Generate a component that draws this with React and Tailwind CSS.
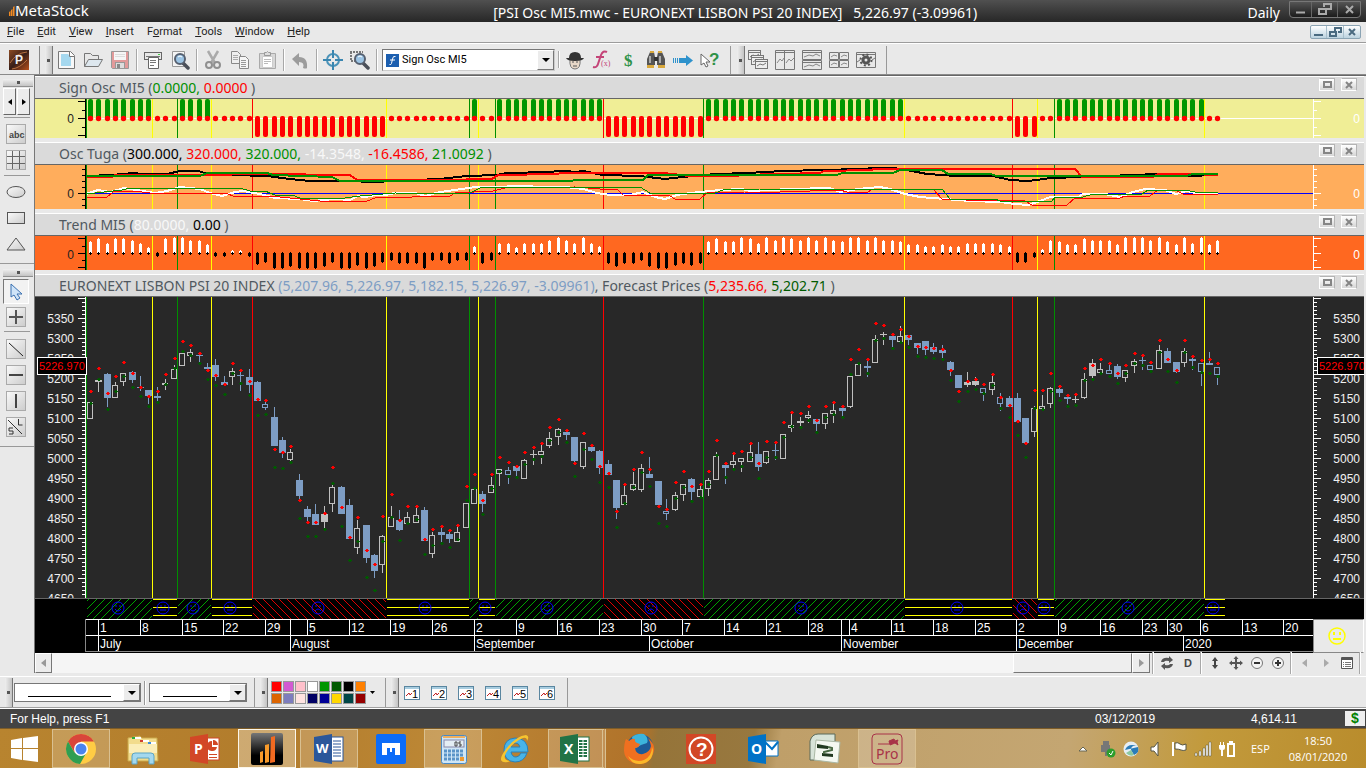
import React from "react";

const menuItems = ["File", "Edit", "View", "Insert", "Format", "Tools", "Window", "Help"];
const menuKeys = { Format: 1 };

const BLUE = "#7d9dc4";
const SILVER = "#c0c0c0";

// kind, high, body top, body bottom, low, forecast high, forecast low
// w = hollow up, h = hollow down, b = filled down, g = filled grey
const candles = [
  ["w", 402, 402, 419, 419, 391, 403],
  ["g", 379, 380, 382, 392, 368, 379],
  ["b", 373, 374, 398, 407, 393, 409],
  ["w", 382, 385, 398, 398, 376, 391],
  ["w", 373, 373, 382, 386, 362, 376],
  ["b", 371, 372, 380, 383, 373, 387],
  ["b", 376, 387, 388, 391, 387, 396],
  ["b", 390, 390, 396, 404, 396, 406],
  ["b", 387, 396, 398, 402, 391, 402],
  ["w", 379, 383, 385, 390, 374, 384],
  ["w", 365, 369, 379, 379, 358, 368],
  ["w", 353, 353, 366, 366, 341, 351],
  ["w", 349, 352, 356, 362, 345, 355],
  ["b", 352, 355, 356, 362, 353, 363],
  ["b", 363, 367, 369, 370, 370, 379],
  ["b", 359, 365, 377, 381, 375, 385],
  ["b", 376, 382, 385, 386, 384, 394],
  ["w", 368, 371, 377, 385, 363, 373],
  ["b", 370, 375, 376, 391, 370, 383],
  ["b", 369, 377, 385, 393, 381, 395],
  ["b", 381, 382, 401, 401, 399, 415],
  ["h", 402, 404, 408, 410, 400, 414],
  ["b", 407, 417, 446, 446, 449, 467],
  ["b", 437, 440, 453, 458, 452, 468],
  ["w", 449, 452, 460, 461, 446, 462],
  ["b", 474, 480, 496, 499, 500, 518],
  ["b", 506, 509, 517, 521, 522, 536],
  ["b", 504, 514, 525, 525, 522, 536],
  ["g", 506, 514, 522, 528, 513, 529],
  ["w", 485, 487, 504, 512, 467, 483],
  ["b", 486, 487, 514, 514, 507, 526],
  ["b", 499, 505, 539, 539, 537, 560],
  ["w", 520, 528, 548, 554, 517, 541],
  ["b", 525, 525, 558, 563, 550, 577],
  ["b", 554, 555, 571, 578, 564, 590],
  ["w", 535, 536, 565, 573, 516, 541],
  ["w", 506, 517, 527, 527, 494, 517],
  ["b", 510, 520, 530, 531, 520, 540],
  ["w", 512, 517, 524, 524, 506, 523],
  ["w", 508, 515, 523, 523, 506, 519],
  ["b", 507, 510, 541, 541, 539, 554],
  ["w", 532, 535, 554, 558, 529, 545],
  ["b", 527, 532, 535, 542, 526, 543],
  ["b", 532, 534, 539, 543, 530, 547],
  ["w", 527, 532, 542, 542, 525, 539],
  ["w", 503, 503, 528, 528, 486, 500],
  ["w", 489, 489, 504, 504, 474, 488],
  ["b", 491, 494, 504, 512, 500, 514],
  ["w", 477, 485, 493, 493, 474, 488],
  ["w", 469, 469, 474, 486, 457, 471],
  ["h", 467, 470, 475, 484, 462, 476],
  ["b", 466, 466, 471, 476, 466, 477],
  ["w", 459, 460, 479, 479, 452, 464],
  ["g", 450, 454, 455, 465, 447, 459],
  ["w", 444, 451, 455, 464, 443, 456],
  ["w", 432, 438, 446, 448, 427, 440],
  ["w", 428, 429, 437, 445, 419, 432],
  ["b", 432, 432, 435, 440, 430, 442],
  ["b", 437, 437, 461, 463, 463, 476],
  ["w", 442, 442, 467, 469, 433, 449],
  ["b", 447, 447, 451, 452, 445, 459],
  ["b", 450, 451, 468, 474, 466, 482],
  ["b", 460, 464, 475, 475, 473, 487],
  ["b", 480, 480, 508, 519, 511, 527],
  ["w", 485, 495, 505, 505, 484, 503],
  ["w", 472, 484, 490, 491, 469, 487],
  ["w", 464, 468, 490, 492, 452, 472],
  ["b", 457, 474, 478, 478, 469, 486],
  ["b", 481, 481, 505, 505, 506, 523],
  ["h", 499, 511, 514, 520, 509, 526],
  ["w", 492, 495, 510, 511, 482, 498],
  ["w", 484, 484, 495, 501, 471, 487],
  ["b", 478, 479, 492, 501, 486, 501],
  ["w", 486, 489, 497, 497, 484, 497],
  ["w", 478, 480, 489, 496, 471, 484],
  ["w", 452, 456, 480, 480, 440, 455],
  ["b", 465, 465, 468, 484, 463, 477],
  ["w", 455, 461, 465, 468, 453, 469],
  ["w", 458, 458, 462, 472, 451, 466],
  ["w", 445, 452, 462, 462, 443, 457],
  ["b", 442, 454, 467, 471, 463, 478],
  ["w", 451, 451, 463, 464, 441, 457],
  ["b", 443, 450, 451, 460, 442, 457],
  ["w", 434, 434, 459, 459, 422, 437],
  ["w", 413, 425, 428, 432, 412, 426],
  ["g", 417, 421, 423, 429, 413, 427],
  ["w", 411, 415, 418, 423, 406, 420],
  ["b", 419, 419, 424, 431, 420, 432],
  ["w", 413, 413, 424, 429, 406, 417],
  ["w", 404, 410, 414, 423, 402, 414],
  ["b", 408, 408, 411, 416, 406, 417],
  ["w", 376, 376, 407, 408, 359, 374],
  ["w", 364, 364, 376, 376, 349, 363],
  ["b", 361, 366, 368, 377, 359, 373],
  ["w", 335, 339, 363, 363, 323, 340],
  ["g", 332, 334, 335, 345, 325, 338],
  ["b", 336, 336, 340, 347, 334, 348],
  ["w", 326, 336, 342, 342, 329, 342],
  ["b", 335, 335, 340, 345, 336, 347],
  ["b", 343, 343, 348, 354, 346, 356],
  ["b", 341, 341, 350, 355, 347, 357],
  ["b", 343, 347, 352, 354, 348, 358],
  ["b", 345, 350, 353, 358, 349, 359],
  ["b", 361, 362, 370, 376, 370, 380],
  ["b", 375, 375, 388, 388, 391, 401],
  ["g", 372, 382, 385, 387, 381, 391],
  ["g", 377, 381, 385, 386, 379, 389],
  ["h", 388, 388, 393, 401, 384, 393],
  ["w", 376, 382, 390, 395, 374, 385],
  ["h", 393, 397, 404, 411, 397, 408],
  ["b", 396, 398, 407, 407, 405, 417],
  ["b", 393, 398, 422, 422, 421, 435],
  ["b", 418, 418, 443, 443, 443, 457],
  ["w", 406, 408, 432, 437, 390, 408],
  ["w", 395, 406, 409, 409, 390, 409],
  ["w", 387, 388, 404, 408, 373, 391],
  ["b", 387, 389, 393, 397, 386, 400],
  ["b", 397, 397, 399, 404, 395, 406],
  ["g", 395, 399, 400, 403, 394, 405],
  ["w", 373, 379, 398, 399, 368, 380],
  ["g", 359, 363, 376, 378, 365, 379],
  ["w", 363, 369, 373, 374, 359, 373],
  ["h", 364, 370, 374, 374, 363, 376],
  ["b", 364, 366, 377, 379, 373, 383],
  ["w", 370, 370, 378, 382, 365, 373],
  ["w", 359, 361, 366, 373, 353, 363],
  ["b", 357, 360, 361, 370, 355, 365],
  ["h", 365, 365, 370, 370, 362, 371],
  ["w", 345, 350, 369, 369, 340, 352],
  ["b", 348, 351, 363, 363, 359, 371],
  ["b", 362, 362, 372, 373, 370, 382],
  ["w", 348, 351, 363, 367, 340, 352],
  ["b", 356, 359, 361, 370, 356, 367],
  ["h", 363, 363, 372, 386, 360, 372],
  ["b", 352, 363, 365, 365, 359, 373],
  ["h", 367, 367, 375, 385, 363, 376],
];

const trend = [
  12, 15, 10, 15, 15, 13, 10, 6, -3, 15, 16, 16, 13, 13, 9, -3, -3, 3, 3, -3,
  -11, -9, -15, -15, -13, -15, -15, -15, -13, -9, -15, -15, -12, -15, -13, -9,
  -7, -10, -10, -10, -15, -7, -7, -10, -7, -7, 7, -10, -7, 10, 10, 6, 10, 10,
  10, 13, 16, 13, 10, 16, 10, 7, -10, -13, -10, -10, -7, -13, -15, -15, -12,
  -10, -12, -10, 12, 15, 12, 12, 16, 15, 10, 16, 13, 16, 15, 13, 16, 13, 16,
  13, 12, 16, 16, 13, 16, 13, 13, 12, 9, 9, 7, 7, 9, 7, 7, 10, 10, 10, 10, 9,
  7, -9, -9, -4, 4, 13, 12, 9, 9, 15, 13, 13, 13, 9, 16, 16, 16, 13, 16, 12, 9,
  16, 10, 16, 9, 13,
];

const greenRuns = [[0, 7], [11, 14], [46, 46], [49, 61], [74, 97], [116, 133]];
const redRuns = [[20, 35], [62, 73], [111, 113]];
const inRuns = (runs, i) => runs.some(([a, b]) => i >= a && i <= b);

const barX = i => Math.round(90 + 8.35 * i);

const Y = "#ffff00";
const G = "#008f00";
const R = "#ff0000";

const signals = [
  [152, Y], [177, G], [211, Y], [252, R], [386, Y], [469, G], [478, Y], [495, G],
  [603, R], [703, G], [904, Y], [1012, R], [1037, Y], [1054, G], [1204, Y],
];

// start, end, mood, face x
const moods = [
  [87, 152, "up", 118], [153, 177, "flat", 163], [178, 211, "up", 193],
  [212, 252, "flat", 230], [253, 386, "down", 318], [387, 469, "flat", 425],
  [470, 478, "up", 0], [479, 495, "flat", 485], [496, 603, "up", 547],
  [604, 703, "down", 651], [704, 904, "up", 801], [905, 1012, "flat", 957],
  [1013, 1037, "down", 1023], [1038, 1054, "flat", 1044], [1055, 1204, "up", 1128],
  [1205, 1225, "flat", 1213],
];

const days = [
  [98, "1"], [140, "8"], [182, "15"], [223, "22"], [265, "29"], [290, ""], [307, "5"],
  [349, "12"], [390, "19"], [432, "26"], [474, "2"], [516, "9"], [557, "16"],
  [599, "23"], [641, "30"], [682, "7"], [724, "14"], [766, "21"], [808, "28"],
  [841, ""], [849, "4"], [891, "11"], [933, "18"], [975, "25"], [1016, "2"],
  [1058, "9"], [1100, "16"], [1142, "23"], [1167, "30"], [1200, "6"], [1242, "13"],
  [1283, "20"],
];

const months = [
  [98, "July"], [290, "August"], [474, "September"], [649, "October"],
  [841, "November"], [1016, "December"], [1183, "2020"],
];

const oscLines = [
  ["#000000", 2, "86,176 112,175 133,173 143,174 167,174 180,171 198,171 205,173 233,175 267,176 290,179 310,181 340,181 382,182 390,180 415,180 440,179 467,176 497,175 507,173 550,172 558,171 567,171 575,172 583,171 603,175 640,176 665,179 683,177 703,175 717,174 747,173 783,171 823,170 860,169 877,168 893,168 907,170 927,174 957,176 993,176 1010,180 1027,181 1037,180 1050,178 1082,177 1133,175 1158,174 1187,176 1218,175"],
  ["#ff0000", 2, "86,177 112,177 115,175 205,175 260,174 350,175 357,180 440,180 492,179 498,175 557,174 561,173 663,173 690,176 737,176 741,175 820,173 824,171 870,170 875,169 1075,169 1082,177 1153,177 1158,174 1190,174 1218,175"],
  ["#009000", 2, "86,176 200,176 207,173 267,173 273,175 332,177 340,181 570,181 576,180 643,180 648,175 837,175 842,173 893,173 900,170 942,170 948,174 990,174 997,176 1187,176 1192,174 1218,174"],
  ["#ffffff", 2, "86,194 98,190 110,192 124,188 143,191 155,193 167,191 180,187 200,189 210,193 222,196 235,192 243,191 260,194 275,198 300,199 313,201 335,199 350,200 358,196 365,197 375,195 385,195 395,193 415,193 425,196 440,192 455,190 475,187 500,187 515,186 550,187 565,187 583,189 597,193 610,195 630,195 643,192 655,197 665,199 677,195 690,193 720,190 742,189 750,191 770,190 790,189 830,188 840,192 858,189 880,187 890,189 905,194 920,197 945,199 970,201 1000,202 1015,204 1028,205 1040,201 1050,197 1078,197 1083,194 1105,194 1120,197 1133,192 1145,189 1165,190 1176,194 1187,191 1200,194 1218,194"],
  ["#ff0000", 1, "86,197 107,197 113,192 133,191 150,193 180,193 228,194 233,196 270,196 290,198 310,200 320,201 367,201 375,198 450,196 455,193 493,191 505,188 575,187 600,189 617,189 623,195 670,196 675,199 700,199 707,193 745,192 780,192 840,190 847,192 868,192 873,189 933,189 942,199 965,200 1025,201 1032,205 1067,205 1075,198 1120,198 1125,196 1150,196 1158,190 1177,191 1183,194 1218,195"],
  ["#009000", 1, "86,194 122,190 130,188 240,188 250,191 265,191 275,195 292,195 300,198 345,198 360,196 395,193 430,194 470,193 480,188 510,187 640,187 650,193 715,193 723,190 760,189 942,189 950,199 995,199 1000,201 1052,201 1055,197 1083,197 1093,194 1142,194 1148,190 1185,190 1195,192 1218,193"],
];

const swatches = [
  "#ff0000", "#d25ad2", "#ffc0cb", "#ffffff", "#009600", "#005a00", "#000000", "#ff8000",
  "#dc6400", "#7d7dbe", "#ffe4e1", "#000064", "#000096", "#ffd700", "#004646", "#960000",
];

/* ---------- chart pieces ---------- */

const Signals = ({ top, height }) =>
  signals.map(([x, color]) => (
    <rect key={x} x={x} y={top} width="1" height={height} fill={color} />
  ));

const Axis = ({ side, top, height, color, ticks, children }) => {
  const left = side === "left";
  return (
    <svg
      className={left ? "w-[52px] shrink-0" : "w-[51px] shrink-0"}
      height={height}
      viewBox={left ? `35 ${top} 52 ${height}` : `1313 ${top} 51 ${height}`}
      shapeRendering="crispEdges"
    >
      {ticks.map(([y, len]) => (
        <rect key={y} x={left ? 85 - len : 1314} y={y} width={len} height="1" fill={color} />
      ))}
      <rect x={left ? 85 : 1313} y={top} width="1" height={height} fill={color} />
      {left && <rect x="86" y={top} width="1" height={height} fill={G} />}
      {children}
    </svg>
  );
};

const AxisText = ({ side, y, fill, children }) => (
  <text
    x={side === "left" ? 74 : 1360}
    y={y}
    textAnchor="end"
    fill={fill}
    fontSize="12"
    fontFamily="Liberation Sans, sans-serif"
  >
    {children}
  </text>
);

const Plot = ({ top, height, children }) => (
  <svg
    className="flex-1 min-w-0"
    height={height}
    viewBox={`87 ${top} 1226 ${height}`}
    preserveAspectRatio="none"
    shapeRendering="crispEdges"
  >
    {children}
  </svg>
);

const PaneButton = ({ label, children }) => (
  <button
    aria-label={label}
    className="w-4 h-[13px] flex items-center justify-center bg-gradient-to-b from-[#ffffff] to-[#d6d6d6] border border-[#b4b4b4] border-l-white border-b-white"
  >
    {children}
  </button>
);

const PaneHeader = ({ children }) => (
  <div className="h-[23px] flex items-center justify-between bg-[#dadada] border-t border-white border-b border-b-[#666666] pl-6 pr-[7px]">
    <h2 className="font-['Noto_Sans','Open_Sans',sans-serif] text-[14px] leading-5 text-[#505860] whitespace-pre">
      {children}
    </h2>
    <div className="flex gap-[6px] pb-[6px]">
      <PaneButton label="Maximize pane">
        <svg width="9" height="7" viewBox="0 0 9 7">
          <rect x="1" y="1" width="7" height="5" fill="none" stroke="#858585" strokeWidth="2" />
        </svg>
      </PaneButton>
      <PaneButton label="Close pane">
        <svg width="8" height="8" viewBox="0 0 8 8">
          <path d="M1 1l6 6M7 1l-6 6" stroke="#858585" strokeWidth="2" />
        </svg>
      </PaneButton>
    </div>
  </div>
);

const smallTicks = [[101, 7], [110, 3], [118, 7], [127, 3], [135, 7]];
const oscTicks = [[169, 3], [175, 3], [181, 3], [187, 3], [193, 7], [199, 3], [205, 3]];
const trendTicks = [[238, 7], [246, 3], [253, 7], [260, 3], [267, 7]];
const priceTicks = Array.from({ length: 75 }, (_, i) => [298 + i * 4, i % 5 ? 3 : 7]);
const priceLabels = Array.from({ length: 15 }, (_, i) => [318 + i * 20, 5350 - i * 50]);

const SignPane = () => (
  <div className="flex bg-[#f0ee96]">
    <Axis side="left" top={99} height={39} color="#000" ticks={smallTicks}>
      <AxisText side="left" y={123} fill="#222">0</AxisText>
    </Axis>
    <Plot top={99} height={39}>
      <rect x="87" y="118" width="1226" height="1" fill="#fff" />
      <Signals top={99} height={39} />
      {candles.map((_, i) => {
        const x = barX(i);
        return (
          <g key={i} shapeRendering="auto">
            {inRuns(greenRuns, i) && <rect x={x - 2} y="99" width="5" height="20" rx="2" fill="#009600" />}
            {inRuns(redRuns, i) && <rect x={x - 2} y="116" width="5" height="21" rx="2" fill={R} />}
            {!inRuns(redRuns, i) && <circle cx={x + 0.5} cy="118.5" r="2.7" fill={R} />}
          </g>
        );
      })}
    </Plot>
    <Axis side="right" top={99} height={39} color="#fff" ticks={smallTicks}>
      <AxisText side="right" y={123} fill="#fff">0</AxisText>
    </Axis>
  </div>
);

const OscPane = () => (
  <div className="flex bg-[#ffad5c]">
    <Axis side="left" top={165} height={44} color="#000" ticks={oscTicks}>
      <AxisText side="left" y={198} fill="#222">0</AxisText>
    </Axis>
    <Plot top={165} height={44}>
      <Signals top={165} height={44} />
      <rect x="87" y="193" width="1226" height="1" fill="#00f" />
      {oscLines.map(([color, width, points], i) => (
        <polyline key={i} points={points} fill="none" stroke={color} strokeWidth={width} />
      ))}
    </Plot>
    <Axis side="right" top={165} height={44} color="#fff" ticks={oscTicks}>
      <AxisText side="right" y={198} fill="#fff">0</AxisText>
    </Axis>
  </div>
);

const TrendPane = () => (
  <div className="flex bg-[#ff6820]">
    <Axis side="left" top={236} height={34} color="#000" ticks={trendTicks}>
      <AxisText side="left" y={259} fill="#222">0</AxisText>
    </Axis>
    <Plot top={236} height={34}>
      <Signals top={236} height={34} />
      {trend.map((v, i) => {
        const x = barX(i);
        return v > 0 ? (
          <g key={i}>
            <rect x={x - 1} y={254 - v} width="3" height={v} fill="#fff" />
            <rect x={x} y={253 - v} width="1" height="1" fill="#fff" />
            <path d={`M${x - 1} 253h3v1h-3zM${x} 252h1v3h-1z`} fill="#000" />
          </g>
        ) : (
          <g key={i}>
            <rect x={x - 1} y="253" width="3" height={-v} fill="#000" />
            <rect x={x} y="252" width="1" height={2 - v} fill="#000" />
          </g>
        );
      })}
    </Plot>
    <Axis side="right" top={236} height={34} color="#fff" ticks={trendTicks}>
      <AxisText side="right" y={259} fill="#fff">0</AxisText>
    </Axis>
  </div>
);

const Candle = ({ x, data }) => {
  const [kind, high, top, bottom, low, up, down] = data;
  const color = kind === "b" || kind === "h" ? BLUE : SILVER;
  const hollow = kind === "w" || kind === "h";
  const dot = y => `M${x - 1} ${y}h4v1h-4zM${x} ${y - 1}h2v3h-2z`;
  return (
    <g>
      <rect x={x} y={high} width="1" height={Math.max(low - high, 1)} fill={color} />
      {hollow ? (
        <rect x={x - 2.5} y={top + 0.5} width="5" height={Math.max(bottom - top - 1, 1)} fill="#282828" stroke={color} />
      ) : (
        <rect x={x - 3} y={top} width="7" height={Math.max(bottom - top, 1)} fill={color} />
      )}
      <path d={dot(down)} fill="#005a00" />
      <path d={dot(up)} fill={R} />
    </g>
  );
};

const PriceAxis = ({ side }) => {
  const boxX = side === "left" ? 37 : 1317;
  return (
    <Axis side={side} top={297} height={301} color="#fff" ticks={priceTicks}>
      {priceLabels.map(([y, value]) => (
        <AxisText key={value} side={side} y={y + 5} fill="#f0f0f0">{value}</AxisText>
      ))}
      <rect x={boxX + 0.5} y="357.5" width="49" height="17" fill="#000" stroke="#fff" />
      <text x={boxX + 2} y="370" fill={R} fontSize="11" fontFamily="Liberation Sans, sans-serif">
        5226.970
      </text>
    </Axis>
  );
};

const PricePane = () => (
  <div className="flex bg-[#282828]">
    <PriceAxis side="left" />
    <Plot top={297} height={301}>
      <Signals top={297} height={301} />
      {candles.map((c, i) => (
        <Candle key={i} x={barX(i)} data={c} />
      ))}
    </Plot>
    <PriceAxis side="right" />
  </div>
);

const Face = ({ cx, cy, mood }) => (
  <g fill="none" stroke="#0000ff" shapeRendering="auto">
    <circle cx={cx} cy={cy} r="6" />
    <path d={`M${cx - 3} ${cy - 2}h2M${cx + 1} ${cy - 2}h2`} />
    {mood === "flat" && <path d={`M${cx - 3} ${cy + 2}h6`} />}
    {mood === "up" && <path d={`M${cx - 3} ${cy + 1}q3 4 6 0`} />}
    {mood === "down" && <path d={`M${cx - 3} ${cy + 3}q3 -4 6 0`} />}
  </g>
);

const MoodStrip = () => (
  <div className="flex bg-black border-t border-[#666666]">
    <div className="w-[52px] shrink-0" />
    <Plot top={599} height={20}>
      <defs>
        <pattern id="rising" width="8" height="8" patternUnits="userSpaceOnUse">
          <path d="M-1 9L9 -1M-1 1L1 -1M7 9L9 7" stroke="#00a000" />
        </pattern>
        <pattern id="falling" width="8" height="8" patternUnits="userSpaceOnUse">
          <path d="M-1 -1L9 9M7 -1L9 1M-1 7L1 9" stroke="#e00000" />
        </pattern>
      </defs>
      {moods.map(([a, b, mood, face]) => (
        <g key={a}>
          {mood === "flat" ? (
            [599, 607, 615].map(y => <rect key={y} x={a} y={y} width={b - a} height="1" fill={Y} />)
          ) : (
            <rect x={a} y="599" width={b - a} height="20" fill={mood === "up" ? "url(#rising)" : "url(#falling)"} />
          )}
          {face > 0 && <Face cx={face} cy={608} mood={mood} />}
        </g>
      ))}
    </Plot>
    <div className="w-[51px] shrink-0" />
  </div>
);

const DateAxis = () => (
  <div className="flex bg-black">
    <div className="w-[50px] shrink-0" />
    <svg
      className="flex-1 min-w-0"
      height="34"
      viewBox="85 619 1228 34"
      preserveAspectRatio="none"
      shapeRendering="crispEdges"
      fontSize="12"
      fontFamily="Liberation Sans, sans-serif"
    >
      <rect x="85" y="619" width="1228" height="1" fill="#fff" />
      <rect x="85" y="635" width="1228" height="1" fill="#fff" />
      <rect x="85" y="651" width="1228" height="1" fill="#888" />
      <rect x="85" y="619" width="1" height="33" fill="#888" />
      {days.map(([x, label]) => (
        <g key={x} fill="#fff">
          <rect x={x} y="620" width="1" height="15" />
          <text x={x + 2} y="632">{label}</text>
        </g>
      ))}
      {months.map(([x, label]) => (
        <g key={x} fill="#fff">
          <rect x={x} y="636" width="1" height="15" />
          <text x={x + 2} y="648">{label}</text>
        </g>
      ))}
    </svg>
    <div className="w-[51px] shrink-0 bg-[#e9e9e9] border border-[#888888] border-r-white flex items-center justify-center">
      <svg width="21" height="18" viewBox="0 0 21 18">
        <circle cx="9" cy="9" r="8" fill="none" stroke="#ffff00" strokeWidth="1.500" />
        <path d="M5 5h2v3H5zM11 5h2v3h-2zM5 11h8v2H5z" fill="#ffff00" />
      </svg>
    </div>
  </div>
);

/* ---------- chrome: bars and buttons ---------- */

const ToolButton = ({ label, children }) => (
  <button aria-label={label} className="w-[27px] h-[26px] pl-[3px] flex items-center shrink-0">
    <svg width="20" height="20" viewBox="0 0 20 20">{children}</svg>
  </button>
);

const Divider = () => <span className="w-[2px] mx-[2px] h-[22px] border-l border-[#a8a8a8] border-r border-r-white shrink-0" />;

const Grip = () => (
  <span className="w-2 self-stretch shrink-0 bg-gradient-to-r from-[#eeeeee] to-[#c4c4c4] border-r border-[#777777] flex items-center justify-center">
    <span className="size-[3px] bg-[#555555]" />
  </span>
);

const WideGrip = () => (
  <span className="h-2 w-[30px] mx-[3px] shrink-0 bg-gradient-to-b from-[#f0f0f0] to-[#c4c4c4] border-b border-[#909090] flex items-center justify-center">
    <span className="size-[3px] bg-[#555555]" />
  </span>
);

const DropArrow = () => (
  <span className="w-[17px] self-stretch shrink-0 bg-[#ececec] border border-white border-r-[#777777] border-b-[#777777] flex items-center justify-center pointer-events-none">
    <svg width="8" height="4" viewBox="0 0 8 4"><path d="M0 0h8L4 4z" /></svg>
  </span>
);

const TitleBar = () => (
  <header className="h-[22px] flex items-center bg-gradient-to-b from-[#505050] to-[#272727] text-white font-['Noto_Sans','Open_Sans',sans-serif]">
    <svg className="ml-[9px]" width="6" height="10" viewBox="0 0 6 10">
      <path d="M0 10V6l1.500-1v5zM2 10V4l1.500-1v7zM4 10V1l1.500-1v10z" fill="#f08a24" />
    </svg>
    <span className="pb-[2px] text-[15px] leading-5">MetaStock</span>
    <h1 className="flex-1 pl-[134px] pt-1 text-center text-[14px] leading-[18px] whitespace-pre">
      {"[PSI Osc MI5.mwc - EURONEXT LISBON PSI 20 INDEX]   5,226.97 (-3.09961)"}
    </h1>
    <span className="pt-1 text-[14px] leading-[18px]">Daily</span>
    <div className="ml-[9px] mr-[5px] mb-1 flex h-[17px] border border-[#777777] rounded-b-sm bg-gradient-to-b from-[#555555] to-[#1c1c1c] divide-x divide-[#666666]">
      <button aria-label="Minimize" className="w-[22px] flex items-center justify-center">
        <svg width="10" height="10"><path d="M0 8.500h9" stroke="#aaa" strokeWidth="2" /></svg>
      </button>
      <button aria-label="Restore" className="w-[26px] flex items-center justify-center">
        <svg width="14" height="12" fill="none" stroke="#aaa" strokeWidth="2"><path d="M6 4V1h7v5h-4M1 6h7v5H1z" /></svg>
      </button>
      <button aria-label="Close" className="w-[22px] flex items-center justify-center">
        <svg width="9" height="9"><path d="M1 1l7 7M8 1l-7 7" stroke="#aaa" strokeWidth="2" /></svg>
      </button>
    </div>
  </header>
);

const MenuBar = () => (
  <div className="h-[21px] flex items-center justify-between bg-[#e9e9e9] border-b border-[#9c9c9c]">
    <nav className="flex gap-[13px] pl-[7px] font-['Roboto',sans-serif] text-[11px] leading-4 text-[#222222]">
      {menuItems.map(item => {
        const k = menuKeys[item] || 0;
        return (
          <button key={item}>
            {item.slice(0, k)}
            <u>{item[k]}</u>
            {item.slice(k + 1)}
          </button>
        );
      })}
    </nav>
    <div className="flex h-[14px] mr-[5px] border border-[#8ba4b4] rounded-[2px] bg-gradient-to-b from-white to-[#bcd3e0] divide-x divide-[#a8bfcc]">
      <button aria-label="Minimize chart" className="w-4 flex items-center justify-center">
        <svg width="9" height="9"><path d="M0 7h9" stroke="#4a6a80" strokeWidth="2" /></svg>
      </button>
      <button aria-label="Restore chart" className="w-[17px] flex items-center justify-center">
        <svg width="13" height="10" fill="none" stroke="#4a6a80" strokeWidth="2"><path d="M6 4V1h6v4H9M1 5h6v4H1z" /></svg>
      </button>
      <button aria-label="Close chart" className="w-4 flex items-center justify-center">
        <svg width="8" height="8"><path d="M1 1l6 6M7 1l-6 6" stroke="#4a6a80" strokeWidth="2" /></svg>
      </button>
    </div>
  </div>
);

const Lens = () => (
  <>
    <path d="M13 13l5 5" stroke="#4a4f58" strokeWidth="3.500" strokeLinecap="round" />
    <circle cx="10" cy="9" r="5" fill="#9cc4e4" stroke="#566070" strokeWidth="2" />
    <path d="M8 7q2-2 4 0" fill="none" stroke="#fff" />
  </>
);

const Toolbar = () => (
  <div className="h-[31px] flex items-center bg-[#e9e9e9] border-t border-white pt-[2px]">
    <button aria-label="Power Console" className="mx-[9px] shrink-0">
      <svg width="20" height="20" viewBox="0 0 20 20">
        <defs>
          <linearGradient id="pc" x1="0" y1="0" x2="1" y2="1">
            <stop offset="0" stopColor="#8c4a22" />
            <stop offset=".5" stopColor="#3a1f18" />
            <stop offset="1" stopColor="#b8501c" />
          </linearGradient>
        </defs>
        <rect width="20" height="20" fill="url(#pc)" />
        <path d="M1 13q6-10 17-11M3 19q8-1 15-9" fill="none" stroke="#b87040" />
        <text x="6" y="14" fontSize="12" fontWeight="bold" fill="#eee" fontFamily="Liberation Sans">P</text>
      </svg>
    </button>
    <span className="ml-[1px] mr-[5px] self-stretch border-l border-[#888888]" />
    <Grip />
    <ToolButton label="New">
      <path d="M2.500 1.500h12l4 4v13h-16z" fill="#f8f8f8" stroke="#777" />
      <path d="M5 4h7l3 3v9H5z" fill="#a5d8ef" />
      <path d="M13.500 1.500v5h5" fill="#fff" stroke="#777" />
    </ToolButton>
    <ToolButton label="Open">
      <path d="M1.500 16.500v-13h6l2 2h6v4" fill="#e8e8e8" stroke="#777" />
      <path d="M1.500 16.500l4-7h14l-4 7z" fill="#dde7ee" stroke="#777" />
    </ToolButton>
    <ToolButton label="Save">
      <path d="M1.500 1.500h17v17h-16l-1-1z" fill="#e29a9a" stroke="#999" />
      <rect x="4" y="2" width="12" height="8" fill="#f6f6f6" />
      <path d="M5 4.500h10M5 6.500h10" stroke="#ddd" />
      <rect x="5.500" y="12.500" width="9" height="6" fill="#ddd" stroke="#999" />
      <rect x="7" y="14" width="3" height="4" fill="#888" />
    </ToolButton>
    <Divider />
    <ToolButton label="Print">
      <rect x="1.500" y="2.500" width="17" height="7" fill="#e8e8e8" stroke="#666" />
      <path d="M3 6.500h14" stroke="#777" />
      <path d="M5.500 7.500h10v11h-10z" fill="#fff" stroke="#666" />
      <path d="M7 10.500h6M7 12.500h6M7 15.500h4" stroke="#777" />
      <rect x="15" y="4" width="2" height="1" fill="#4c4" />
    </ToolButton>
    <ToolButton label="Print Preview">
      <path d="M2.500 1.500h12v15h-12z" fill="#f4f4f4" stroke="#999" />
      <Lens />
    </ToolButton>
    <Divider />
    <ToolButton label="Cut">
      <path d="M5 1l7 12M15 1L8 13" stroke="#aaa" strokeWidth="2.500" />
      <circle cx="6" cy="15" r="3" fill="none" stroke="#909090" strokeWidth="2" />
      <circle cx="14" cy="15" r="3" fill="none" stroke="#909090" strokeWidth="2" />
    </ToolButton>
    <ToolButton label="Copy">
      <path d="M1.500 1.500h6l3 3v9h-9z" fill="#eee" stroke="#888" />
      <path d="M3 5.500h5M3 7.500h5M3 9.500h5" stroke="#aaa" />
      <path d="M9.500 6.500h6l3 3v9h-9z" fill="#f6f6f6" stroke="#888" />
      <path d="M11 10.500h5M11 12.500h5M11 14.500h5M11 16.500h5" stroke="#999" />
    </ToolButton>
    <ToolButton label="Paste">
      <path d="M2.500 3.500h16v15h-16z" fill="#d8d8d8" stroke="#aaa" />
      <path d="M5.500 6.500h10v11h-10z" fill="#fff" stroke="#ccc" />
      <path d="M7.500 5.500v-3h2q1-2 2 0h2v3z" fill="#ddd" stroke="#999" />
      <path d="M7 9.500h7M7 11.500h7M7 13.500h4" stroke="#bbb" />
    </ToolButton>
    <Divider />
    <ToolButton label="Undo">
      <path d="M2 9l7-6v4q9 0 8 11-1 1-4 0 2-6-4-6v4z" fill="#9c9c9c" />
    </ToolButton>
    <Divider />
    <ToolButton label="Crosshair">
      <circle cx="10" cy="10" r="6" fill="none" stroke="#4b93b8" strokeWidth="2" />
      <path d="M10 0v8M10 12v8M0 10h8M12 10h8" stroke="#3a86b0" strokeWidth="2" />
    </ToolButton>
    <ToolButton label="Zoom Box">
      <path d="M0 2h13M1 2v9h5" fill="none" stroke="#777" strokeDasharray="2 1" strokeWidth="2" />
      <Lens />
    </ToolButton>
    <Divider />
    <label className="ml-[2px] w-[173px] h-[22px] shrink-0 flex items-center bg-white border border-[#777777] border-r-[#cccccc] border-b-[#cccccc] pl-[3px]">
      <svg width="13" height="13" viewBox="0 0 13 13" className="shrink-0">
        <rect width="13" height="13" fill="#1c5fb0" />
        <path d="M9.500 2.500Q7 1.500 6.500 5L5.500 9.500Q5 11 3.500 10.500M4 6h5" fill="none" stroke="#fff" />
      </svg>
      <select aria-label="Indicator" className="flex-1 min-w-0 appearance-none bg-transparent pl-[3px] font-['Roboto',sans-serif] text-[11px] leading-4 text-black">
        <option>Sign Osc MI5</option>
      </select>
      <DropArrow />
    </label>
    <span className="ml-[1px]"><Divider /></span>
    <ToolButton label="Expert Advisor">
      <path d="M5 9q-1 10 5 10t5-10z" fill="#e8d8c8" stroke="#777" />
      <path d="M4 8q0-6 6-6t6 6l3 0q-1 3-9 3T1 8z" fill="#333" />
      <path d="M7 12h2M11 12h2M8 16h4" stroke="#555" />
    </ToolButton>
    <ToolButton label="Indicator Builder">
      <path d="M15 2q-4-2-6 3L6 14q-1 4-5 3" fill="none" stroke="#c44478" strokeWidth="2" />
      <path d="M4 7h8" stroke="#c44478" strokeWidth="2" />
      <text x="9" y="16" fontSize="8" fill="#c44478" fontFamily="Liberation Serif">(x)</text>
    </ToolButton>
    <ToolButton label="System Tester">
      <text x="5" y="16" fontSize="17" fontWeight="bold" fill="#2f9248" fontFamily="Liberation Serif">$</text>
    </ToolButton>
    <ToolButton label="Explorer">
      <path d="M4 2h4l1 5v8H1V9zM12 2h4l3 7v6h-8V7z" fill="#555" />
      <path d="M8 7h4v4H8z" fill="#333" />
      <path d="M4 1h4v2H4zM12 1h4v2h-4zM1 15h7v3H1zM12 15h7v3h-7z" fill="#d8a83c" />
      <path d="M4 6v7M14 6v7" stroke="#aaa" strokeWidth="2" />
    </ToolButton>
    <ToolButton label="Option Scope">
      <path d="M0 8h1v5H0zM2 8h1v5H2zM4 8h1v5H4zM6 8h7V5l7 5.500-7 5.500v-3H6z" fill="#2e92cc" />
    </ToolButton>
    <ToolButton label="Context Help">
      <path d="M1 4v11l3-2 2 4 2-1-2-4h4z" fill="#fff" stroke="#666" />
      <text x="9" y="15" fontSize="17" fontWeight="bold" fill="#2f9248" fontFamily="Liberation Sans">?</text>
    </ToolButton>
    <span className="mx-[6px] self-stretch border-l border-[#999999]" />
    <Grip />
    <ToolButton label="Cascade">
      {[[0, 1], [3, 6], [7, 10]].map(([x, y]) => (
        <g key={x}>
          <rect x={x + 0.5} y={y - 0.5} width="12" height="9" fill="#eee" stroke="#777" />
          <path d={`M${x + 1} ${y + 1.5}h11M${x + 2} ${y + 6}l3-2 3 1 3-2`} fill="none" stroke="#777" />
        </g>
      ))}
    </ToolButton>
    <ToolButton label="Column">
      <path d="M.5 .5h19v19H.5zM.5 2.500h19M9.500 1v18" fill="#e8e8e8" stroke="#777" />
      <path d="M2 13l3-4 2 2 2-3M11 13l3-4 2 2 3-3" fill="none" stroke="#888" />
    </ToolButton>
    <ToolButton label="Row">
      <path d="M.5 .5h19v9H.5zM.5 10.500h19v9H.5zM1 2.500h18M1 12.500h18" fill="#e8e8e8" stroke="#777" />
      <path d="M2 7l5-2 4 1 3-2 4 2M2 17l5-2 4 1 3-2 4 2" fill="none" stroke="#888" />
    </ToolButton>
    <ToolButton label="Tile">
      <path d="M.5 2.500h9v7h-9zM10.500 2.500h9v7h-9zM.5 10.500h9v7h-9zM10.500 10.500h9v7h-9z" fill="#e8e8e8" stroke="#777" />
      <path d="M2 7l3-2 3 1M12 7l3-2 3 1M2 15l3-2 3 1M12 15l3-2 3 1" fill="none" stroke="#888" />
    </ToolButton>
    <ToolButton label="Chart Options">
      <path d="M.5 2.500h19v15H.5zM1 4.500h18M1 12l3-2M16 10l3-2" fill="#e8e8e8" stroke="#777" />
      <circle cx="10" cy="10" r="3" fill="none" stroke="#555" strokeWidth="3" />
      <circle cx="10" cy="10" r="5.500" fill="none" stroke="#555" strokeWidth="2" strokeDasharray="2 2.300" />
    </ToolButton>
    <span className="ml-[6px] self-stretch border-l border-[#999999]" />
  </div>
);

const SideButton = ({ label, framed, children }) => (
  <button aria-label={label} className="w-8 h-[26px] flex items-center justify-center shrink-0">
    <svg width="20" height="20" viewBox="0 0 20 20">
      {framed && <rect x=".5" y=".5" width="19" height="19" fill="url(#face)" stroke="#aaa" />}
      {children}
    </svg>
  </button>
);

const SideBar = () => (
  <aside className="w-[35px] shrink-0 bg-[#e9e9e9] border-r border-[#777777] flex flex-col pt-1">
    <svg width="0" height="0">
      <defs>
        <linearGradient id="face" x1="0" y1="0" x2="1" y2="1">
          <stop offset="0" stopColor="#fafafa" />
          <stop offset="1" stopColor="#cccccc" />
        </linearGradient>
      </defs>
    </svg>
    <WideGrip />
    <div className="flex gap-[1px] mt-[1px] ml-[3px] h-[27px]">
      <button aria-label="Previous" className="w-[13px] flex items-center justify-center bg-[#ececec] border border-white border-r-[#666666] border-b-[#666666]">
        <svg width="4" height="6"><path d="M4 0v6L0 3z" /></svg>
      </button>
      <button aria-label="Next" className="w-[13px] flex items-center justify-center bg-[#ececec] border border-white border-r-[#666666] border-b-[#666666]">
        <svg width="4" height="6"><path d="M0 0v6l4-3z" /></svg>
      </button>
    </div>
    <span className="mx-1 mt-[2px] mb-[3px] border-t border-[#999999]" />
    <SideButton label="Text" framed>
      <text x="3" y="14" fontSize="9" fontWeight="bold" fill="#444" fontFamily="Liberation Sans">abc</text>
    </SideButton>
    <SideButton label="Grid" framed>
      <path d="M1 6.500h18M1 13.500h18M6.500 1v18M13.500 1v18" stroke="#666" />
    </SideButton>
    <span className="mx-1 mt-[2px] mb-[3px] border-t border-[#999999]" />
    <SideButton label="Ellipse">
      <ellipse cx="10" cy="10" rx="9" ry="5.500" fill="url(#face)" stroke="#555" />
    </SideButton>
    <SideButton label="Rectangle">
      <rect x="1.500" y="4.500" width="17" height="11" fill="url(#face)" stroke="#555" />
    </SideButton>
    <SideButton label="Triangle">
      <path d="M1 16L10 4l9 12z" fill="url(#face)" stroke="#555" />
    </SideButton>
    <span className="mt-[6px] mb-[5px] border-t border-[#999999]" />
    <WideGrip />
    <button aria-label="Select" className="mx-[3px] mt-[2px] w-[26px] h-[25px] bg-[#f2f2f2] border border-[#777777] border-r-white border-b-white flex items-center justify-center">
      <svg width="16" height="20" viewBox="0 0 16 20">
        <path d="M3 2v13l3-2 3 5 3-2-3-4h5z" fill="#cfe4f8" stroke="#3a70b0" />
      </svg>
    </button>
    <SideButton label="Cross" framed>
      <path d="M10 3v14M3 10h14" stroke="#555" strokeWidth="2" />
    </SideButton>
    <span className="mx-1 mt-[1px] mb-1 border-t border-[#999999]" />
    <SideButton label="Trendline" framed><path d="M3 4l14 13" stroke="#222" /></SideButton>
    <SideButton label="Horizontal Line" framed><path d="M3 10h14" stroke="#444" strokeWidth="2" /></SideButton>
    <SideButton label="Vertical Line" framed><path d="M10 3v14" stroke="#444" strokeWidth="2" /></SideButton>
    <SideButton label="Trade Line" framed>
      <path d="M2 3l14 14M12.500 2v6h4" fill="none" stroke="#333" />
      <path d="M7 11H3v3h4v3H3" fill="none" stroke="#333" />
    </SideButton>
    <span className="mt-[6px] border-t border-[#999999]" />
  </aside>
);

const SmallButton = ({ label, children }) => (
  <button aria-label={label} className="w-[21px] h-[18px] flex items-center justify-center">
    <svg width="14" height="14" viewBox="0 0 14 14">{children}</svg>
  </button>
);

const ScrollRow = () => (
  <div className="h-[20px] flex bg-[#e9e9e9]">
    <button aria-label="Scroll left" className="w-[17px] bg-[#ececec] border border-white border-r-[#777777] border-b-[#777777] flex items-center justify-center">
      <svg width="5" height="8"><path d="M5 0v8L0 4z" fill="#999" /></svg>
    </button>
    <div className="flex-1 flex justify-end bg-[#f5f5f5]">
      <div className="w-[119px] bg-[#eeeeee] border border-white border-r-[#777777] border-b-[#777777]" />
    </div>
    <button aria-label="Scroll right" className="w-[18px] bg-[#ececec] border border-white border-r-[#777777] border-b-[#777777] flex items-center justify-center">
      <svg width="5" height="8"><path d="M0 0v8l5-4z" fill="#999" /></svg>
    </button>
    <div className="flex items-center w-[214px]">
      <Divider />
      <SmallButton label="Refresh">
        <path d="M1 6q1-5 8-4V0l4 4-4 3V5Q5 4 4 6zM13 8q-1 5-8 4v2L1 10l4-3v2q4 1 5-1z" fill="#555" />
      </SmallButton>
      <SmallButton label="Periodicity">
        <text x="3" y="11" fontSize="11" fontWeight="bold" fill="#444" fontFamily="Liberation Sans">D</text>
      </SmallButton>
      <Divider />
      <SmallButton label="Vertical scale">
        <path d="M7 1l3 4H8v4h2l-3 4-3-4h2V5H4z" fill="#444" />
      </SmallButton>
      <SmallButton label="Move">
        <path d="M7 0l2.500 3H8v3h3V4.500L14 7l-3 2.500V8H8v3h1.500L7 14l-2.500-3H6V8H3v1.500L0 7l3-2.500V6h3V3H4.500z" fill="#555" />
      </SmallButton>
      <SmallButton label="Zoom out">
        <circle cx="7" cy="7" r="5.500" fill="#f4f4f4" stroke="#777" />
        <path d="M4 7h6" stroke="#333" strokeWidth="2" />
      </SmallButton>
      <SmallButton label="Zoom in">
        <circle cx="7" cy="7" r="5.500" fill="#f4f4f4" stroke="#777" />
        <path d="M4 7h6M7 4v6" stroke="#333" strokeWidth="2" />
      </SmallButton>
      <Divider />
      <SmallButton label="Back"><path d="M9 3v8L4 7z" fill="#aaa" /></SmallButton>
      <SmallButton label="Forward"><path d="M5 3v8l5-4z" fill="#aaa" /></SmallButton>
      <SmallButton label="Data window">
        <path d="M1.500 1.500h11v11h-11z" fill="#fff" stroke="#555" />
        <path d="M2 3h10" stroke="#555" strokeWidth="2" />
        <path d="M3 6.500h1M5 6.500h6M3 8.500h1M5 8.500h6M3 10.500h1M5 10.500h6" stroke="#777" />
      </SmallButton>
      <Divider />
    </div>
  </div>
);

const LinePicker = ({ label, wide }) => (
  <label className={wide ? "w-[127px] h-[19px] flex bg-white border border-[#777777]" : "w-[98px] h-[19px] flex bg-white border border-[#777777]"}>
    <span className="flex-1 grid items-center">
      <select aria-label={label} className="col-start-1 row-start-1 w-full h-full appearance-none bg-transparent">
        <option label=" " />
      </select>
      <span className="col-start-1 row-start-1 ml-[13px] mr-[12px] border-t border-black pointer-events-none" />
    </span>
    <DropArrow />
  </label>
);

const StyleBar = () => (
  <div className="h-[31px] flex items-center bg-[#e9e9e9] border-b border-[#a0a0a0] pt-[1px]">
    <span className="ml-[5px] mr-[1px] self-stretch flex"><Grip /></span>
    <LinePicker label="Line style" wide />
    <span className="mx-[3px] h-6 border-l border-[#999999] border-r border-r-white" />
    <LinePicker label="Line weight" />
    <span className="ml-[7px] mr-[5px] self-stretch border-l border-[#999999]" />
    <span className="self-stretch flex"><Grip /></span>
    <div className="ml-[3px] grid grid-cols-8 gap-[1px]">
      {swatches.map(color => (
        <button
          key={color}
          aria-label={color}
          className="size-[11px] border border-[#999999]"
          style={{ backgroundColor: color }}
        />
      ))}
    </div>
    <button aria-label="More colors" className="ml-1 w-[7px]">
      <svg width="5" height="3"><path d="M0 0h5L2.500 3z" /></svg>
    </button>
    <span className="ml-2 mr-[5px] self-stretch border-l border-[#999999]" />
    <span className="self-stretch flex"><Grip /></span>
    {[1, 2, 3, 4, 5, 6].map(n => (
      <button key={n} aria-label={`Layout ${n}`} className="w-[27px] pl-[5px] flex">
        <svg width="16" height="14" viewBox="0 0 16 14">
          <rect x=".5" y=".5" width="15" height="13" fill="#fff" stroke="#5a86a0" />
          <path d="M1 2h14" stroke="#a8cde0" strokeWidth="2" />
          <path d="M2 10l3-3 1 2 2-2" fill="none" stroke="#c02020" />
          <text x="8" y="12" fontSize="11" fontFamily="Liberation Sans">{n}</text>
        </svg>
      </button>
    ))}
    <span className="ml-[6px] self-stretch border-l border-[#999999]" />
  </div>
);

const StatusBar = () => (
  <div className="h-[20px] flex items-center bg-[#444444] border-t border-white text-[12px] leading-4 text-white pl-[10px] pr-[1px]">
    <span className="flex-1">For Help, press F1</span>
    <span className="w-[156px]">03/12/2019</span>
    <span className="w-[94px]">4,614.11</span>
    <span className="w-5 h-[15px] bg-[#eeeeee] text-[#008000] font-bold text-center text-[14px] leading-[15px]">$</span>
  </div>
);

/* ---------- taskbar ---------- */

const taskItems = [
  {
    name: "Chrome", open: true,
    icon: (
      <>
        <circle cx="16" cy="16" r="15" fill="#fc4" />
        <path d="M3 8.500A15 15 0 0 1 29 8.500H16L10 20z" fill="#d9453a" />
        <path d="M3 8.500A15 15 0 0 0 15 31l6.500-11.500L16 16 9.500 19.500z" fill="#2f9e52" />
        <circle cx="16" cy="16" r="7" fill="#fff" />
        <circle cx="16" cy="16" r="5.500" fill="#4a84ee" />
      </>
    ),
  },
  {
    name: "File Explorer",
    icon: (
      <>
        <path d="M1 5l12-2 2 2h15l1 23H1z" fill="#f2dc8c" stroke="#c9a84a" />
        <path d="M5 4h3v2H5z" fill="#2cae3c" />
        <path d="M8 4h6v2H8zM16 7h6v2h-6zM24 9h5v2h-5z" fill="#fff" />
        <path d="M13 7h3v2h-3z" fill="#d04030" />
        <path d="M21 9h3v2h-3z" fill="#3c8cd8" />
        <path d="M2 11h28v9H2z" fill="#fbeeb8" />
        <path d="M5 31v-8q0-3 3-3h16q3 0 3 3v8h-5v-6H10v6z" fill="#a4d8ee" stroke="#5aa4c4" />
      </>
    ),
  },
  {
    name: "PowerPoint",
    icon: (
      <>
        <rect x="17" y="5" width="13" height="22" fill="#fff" stroke="#d24726" />
        <path d="M1 4l18-3v30L1 28z" fill="#d24726" />
        <path d="M23 8a5 5 0 1 0 5 6h-5zM24 7v5h5a5 5 0 0 0-5-5zM20 21h8v1h-8zM20 24h8v1h-8z" fill="#d24726" />
        <text x="5" y="21" fontSize="14" fontWeight="bold" fill="#fff" fontFamily="Open Sans">P</text>
      </>
    ),
  },
  {
    name: "MetaStock", open: true, active: true,
    icon: (
      <>
        <defs>
          <linearGradient id="ms" x1="0" y1="0" x2="0" y2="1">
            <stop offset="0" stopColor="#777" />
            <stop offset=".7" stopColor="#000" />
          </linearGradient>
        </defs>
        <rect width="32" height="32" rx="2" fill="url(#ms)" />
        <path d="M9 19l3-1v11l-3 1zM14 12l4-1v18l-4 1z" fill="#f79a2a" />
        <path d="M20 4l4-1v26l-5 1z" fill="#f26a21" />
      </>
    ),
  },
  {
    name: "Word", open: true,
    icon: (
      <>
        <rect x="17" y="4" width="13" height="24" fill="#fff" stroke="#2b579a" />
        <path d="M20 8h8M20 11h8M20 14h8M20 17h8M20 20h8M20 23h8" stroke="#2b579a" />
        <path d="M1 4l18-3v30L1 28z" fill="#2b579a" />
        <text x="3" y="20" fontSize="13" fontWeight="bold" fill="#fff" fontFamily="Open Sans">W</text>
      </>
    ),
  },
  {
    name: "Maxthon",
    icon: (
      <>
        <rect x="1" y="1" width="30" height="30" rx="2" fill="#0c6cf8" />
        <path d="M7 22V10h18v12h-5v-7h-3v4h-2v-4h-3v7z" fill="#fff" />
      </>
    ),
  },
  {
    name: "Calculator", open: true,
    icon: (
      <>
        <rect x="4.500" y="2.500" width="25" height="28" rx="2" fill="#cfe6f6" stroke="#4a8ac4" />
        <path d="M6 4h22" stroke="#f0b060" strokeWidth="2" />
        <rect x="7" y="7" width="20" height="7" fill="#e4eef4" stroke="#88a" />
        <path d="M18 9h2v4h-2zM24 9h-2v2h2v2h-2" fill="none" stroke="#444" />
        <path d="M7 18h20M7 22h20M7 26h20" stroke="#5a94c8" strokeWidth="3" strokeDasharray="3 1" />
        <rect x="23" y="24" width="4" height="4" fill="#f09a30" />
      </>
    ),
  },
  {
    name: "Internet Explorer",
    icon: (
      <>
        <path d="M28 20q-3 9-12 9Q5 28 5 17T16 5q13 0 13 14H12q1 5 5 5 3 0 5-4zM12 14h9q-1-4-4.500-4T12 14z" fill="#48b4e8" stroke="#2a80b8" />
        <path d="M5 29q-7-1 2-13Q17 3 27 2q4 1 1 6 0-4-4-3Q14 9 7 20q-4 7 4 8-3 2-6 1z" fill="#f6c430" />
      </>
    ),
  },
  {
    name: "Excel", open: true, stacked: true,
    icon: (
      <>
        <rect x="17" y="4" width="13" height="24" fill="#fff" stroke="#217346" />
        <path d="M20 8h8M20 11h8M20 14h8M20 17h8M20 20h8M20 23h8" stroke="#217346" strokeWidth="2" />
        <path d="M24 5v22" stroke="#fff" />
        <path d="M1 4l18-3v30L1 28z" fill="#217346" />
        <text x="5" y="21" fontSize="14" fontWeight="bold" fill="#fff" fontFamily="Open Sans">X</text>
      </>
    ),
  },
  {
    name: "Firefox",
    icon: (
      <>
        <circle cx="17" cy="14" r="13" fill="#1c5a98" />
        <path d="M9 4q5-4 12-3 5 4 3 9l-6 2-7 4z" fill="#3cb4dc" />
        <path d="M3 6q2 1 3 2 3-3 6-2-1 4 5 5-1 4-5 4 1 7 8 6 7-2 8-8-1-5-3-8 9 8 5 16-4 11-15 10Q2 29 1 18q0-8 2-12z" fill="#f07020" />
        <path d="M29 14q0 9-8 13-9 3-16-4 4 9 13 8 12-2 12-14z" fill="#fbb829" />
      </>
    ),
  },
  {
    name: "Help",
    icon: (
      <>
        <rect x="1" y="1" width="30" height="30" fill="#d24726" />
        <circle cx="16" cy="16" r="11.500" fill="none" stroke="#fff" strokeWidth="2" />
        <text x="11" y="23" fontSize="19" fontWeight="bold" fill="#fff" fontFamily="Liberation Sans">?</text>
      </>
    ),
  },
  {
    name: "Outlook",
    icon: (
      <>
        <path d="M17 8h14v15H17z" fill="#fff" stroke="#0072c6" />
        <path d="M18 9l7 7 6-7" fill="none" stroke="#0072c6" strokeWidth="2" />
        <path d="M1 4l18-3v30L1 28z" fill="#0072c6" />
        <text x="4" y="21" fontSize="14" fontWeight="bold" fill="#fff" fontFamily="Open Sans">O</text>
      </>
    ),
  },
  {
    name: "Documents",
    icon: (
      <>
        <path d="M1 27V8q2-7 8-7h17v26z" fill="#d8e4d8" stroke="#5a6a5a" />
        <path d="M7 7l24 2-2 21-24-3z" fill="#f4f8f0" stroke="#aab8a4" />
        <path d="M8 11l11 2v3l-11-1zM13 20l11 1v3l-11-1z" fill="#223a20" />
        <path d="M19 14l4 1v2l-8 2v2" fill="none" stroke="#4a6a44" strokeWidth="2" />
      </>
    ),
  },
  {
    name: "Pro", open: true,
    icon: (
      <>
        <rect x="1" y="1" width="30" height="30" rx="4" fill="none" stroke="#a83248" />
        <path d="M7 11h11M18 8l5-2 1 2 3-1-1 2 1 3-3-2-5 2z" stroke="#a83248" fill="#a83248" />
        <text x="5" y="26" fontSize="14" fill="#a83248" fontFamily="Noto Sans">Pro</text>
      </>
    ),
  },
];

const tileClass = item => {
  if (item.active) return "w-[58px] h-[39px] flex items-center justify-center bg-[#e0c8a0]/60 border border-[#fbf6ea]";
  if (item.stacked) return "w-[58px] h-[39px] flex items-center justify-start pl-[10px] bg-white/20 border border-[#d9c091] border-r-4 border-double";
  if (item.open) return "w-[58px] h-[39px] flex items-center justify-center bg-white/20 border border-[#d9c091]";
  return "w-[58px] h-[39px] flex items-center justify-center";
};

const TrayIcon = ({ label, children }) => (
  <button aria-label={label} className="w-6 flex justify-center">
    <svg width="18" height="18" viewBox="0 0 18 18">{children}</svg>
  </button>
);

const TaskBar = () => (
  <footer className="h-[40px] flex items-center border-t border-[#7d5c28] bg-[linear-gradient(100deg,#b8842f_0%,#b27c2c_20%,#bd8836_33%,#b0722a_47%,#957439_48%,#98783f_55%,#bf9f69_57%,#c4a672_78%,#c29a3c_88%,#b98c2c_100%)] font-['Open_Sans',sans-serif]">
    <button aria-label="Start" className="w-[50px] mr-[2px] flex justify-center">
      <svg width="28" height="26" viewBox="0 0 28 26" fill="#fff">
        <path d="M0 4l11-2v10H0zM12 2l15-2v12H12zM0 13h11v11L0 22zM12 13h15v13l-15-2z" />
      </svg>
    </button>
    <div className="flex gap-1 flex-1">
      {taskItems.map(item => (
        <button key={item.name} aria-label={item.name} className={tileClass(item)}>
          <svg width="32" height="32" viewBox="0 0 32 32">{item.icon}</svg>
        </button>
      ))}
    </div>
    <div className="flex items-center">
      <TrayIcon label="Show hidden icons"><path d="M5 11l4-4 4 4z" fill="#fff" stroke="#665" /></TrayIcon>
      <TrayIcon label="Safely Remove Hardware">
        <path d="M5 1h6v4H5zM3 5h9v7H9v4H7v-4H3z" fill="#777" />
        <circle cx="13" cy="13" r="4.500" fill="#2c9e2c" />
        <path d="M11 13l2 2 2-4" fill="none" stroke="#fff" />
      </TrayIcon>
      <TrayIcon label="Sync">
        <circle cx="9" cy="9" r="7.500" fill="#e6eef4" />
        <path d="M3 10q3-7 12-4-6-1-6 4l3 5q6-3 4-8" fill="#2a7cb8" />
        <path d="M4 13q4 4 8 2l-3-5z" fill="#8cc8a0" />
      </TrayIcon>
      <TrayIcon label="Volume"><path d="M5 7h3l4-5v14l-4-5H5z" fill="#fff" stroke="#554" /></TrayIcon>
      <TrayIcon label="Action Center">
        <path d="M3 2v14" stroke="#fff" strokeWidth="2" />
        <path d="M5 3q3-1 5 1t6 0v6q-3 1-5 0T5 9z" fill="#fff" stroke="#554" />
      </TrayIcon>
      <TrayIcon label="Network">
        <path d="M1 13h2v3H1zM5 11h2v5H5zM9 8h2v8H9zM12 5h2v11h-2zM15 2h2v14h-2z" fill="#fff" stroke="#554" strokeWidth=".5" />
      </TrayIcon>
      <TrayIcon label="Battery">
        <path d="M1 5h6v3q0 2-2 2v6H3v-6q-2 0-2-2zM2 2h1v3H2zM5 2h1v3H5z" fill="#fff" />
        <path d="M10 4h6v12h-6zM12 2h2v2h-2z" fill="none" stroke="#fff" strokeWidth="2" />
      </TrayIcon>
      <span className="ml-3 w-[38px] text-[11px] leading-4 text-white">ESP</span>
      <time className="w-[58px] mr-[19px] flex flex-col items-center text-[11px] leading-4 text-white">
        <span>18:50</span>
        <span>08/01/2020</span>
      </time>
    </div>
  </footer>
);

const App = () => (
  <div className="w-full overflow-hidden bg-[#e9e9e9] font-['Liberation_Sans',Arial,sans-serif]">
    <TitleBar />
    <MenuBar />
    <Toolbar />
    <div className="flex border-t border-[#8a8a8a]">
      <SideBar />
      <main className="flex-1 min-w-0 border-t border-[#666666] pr-[2px]">
        <PaneHeader>
          {"Sign Osc MI5 ("}
          <span className="text-[#009000]">0.0000,</span> <span className="text-[#ff0000]">0.0000</span>
          {" )"}
        </PaneHeader>
        <SignPane />
        <div className="h-1" />
        <PaneHeader>
          {"Osc Tuga ("}
          <span className="text-black">300.000,</span> <span className="text-[#ff0000]">320.000,</span>{" "}
          <span className="text-[#009000]">320.000,</span> <span className="text-[#f8f8f8]">-14.3548,</span>{" "}
          <span className="text-[#ff0000]">-16.4586,</span> <span className="text-[#009000]">21.0092</span>
          {" )"}
        </PaneHeader>
        <OscPane />
        <div className="h-1" />
        <PaneHeader>
          {"Trend MI5 ("}
          <span className="text-[#f8f8f8]">80.0000,</span> <span className="text-black">0.00</span>
          {" )"}
        </PaneHeader>
        <TrendPane />
        <div className="h-1" />
        <PaneHeader>
          {"EURONEXT LISBON PSI 20 INDEX "}
          <span className="text-[#7d9dc4]">(5,207.96, 5,226.97, 5,182.15, 5,226.97, -3.09961)</span>
          {", Forecast Prices ("}
          <span className="text-[#ff0000]">5,235.66,</span> <span className="text-[#005a00]">5,202.71</span>
          {" )"}
        </PaneHeader>
        <PricePane />
        <MoodStrip />
        <DateAxis />
        <ScrollRow />
      </main>
    </div>
    <div className="h-1 border-b border-white" />
    <StyleBar />
    <StatusBar />
    <TaskBar />
  </div>
);

export default App;
